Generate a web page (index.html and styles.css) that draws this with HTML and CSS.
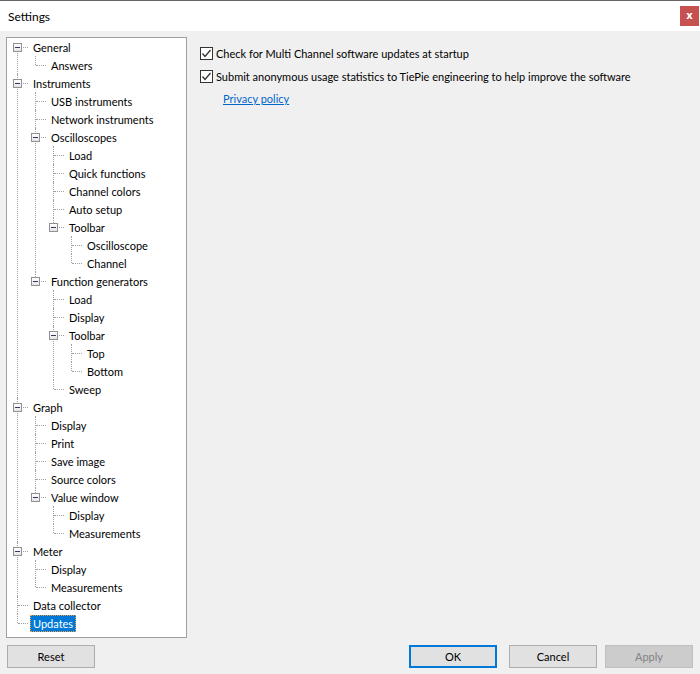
FILE: index.html
```html
<!DOCTYPE html>
<html lang="en">
<head>
<meta charset="UTF-8">
<title>Settings</title>
<link rel="stylesheet" href="styles.css">
</head>
<body>
<div class="window">
  <div class="titlebar">
    <span class="title">Settings</span>
    <span class="close">x</span>
  </div>

  <div class="main">
    <ul class="tree">
      <li><div class="node"><span class="toggle"></span><span class="label">General</span></div>
        <ul>
          <li><div class="node"><span class="label">Answers</span></div></li>
        </ul>
      </li>
      <li><div class="node"><span class="toggle"></span><span class="label">Instruments</span></div>
        <ul>
          <li><div class="node"><span class="label">USB instruments</span></div></li>
          <li><div class="node"><span class="label">Network instruments</span></div></li>
          <li><div class="node"><span class="toggle"></span><span class="label">Oscilloscopes</span></div>
            <ul>
              <li><div class="node"><span class="label">Load</span></div></li>
              <li><div class="node"><span class="label">Quick functions</span></div></li>
              <li><div class="node"><span class="label">Channel colors</span></div></li>
              <li><div class="node"><span class="label">Auto setup</span></div></li>
              <li><div class="node"><span class="toggle"></span><span class="label">Toolbar</span></div>
                <ul>
                  <li><div class="node"><span class="label">Oscilloscope</span></div></li>
                  <li><div class="node"><span class="label">Channel</span></div></li>
                </ul>
              </li>
            </ul>
          </li>
          <li><div class="node"><span class="toggle"></span><span class="label">Function generators</span></div>
            <ul>
              <li><div class="node"><span class="label">Load</span></div></li>
              <li><div class="node"><span class="label">Display</span></div></li>
              <li><div class="node"><span class="toggle"></span><span class="label">Toolbar</span></div>
                <ul>
                  <li><div class="node"><span class="label">Top</span></div></li>
                  <li><div class="node"><span class="label">Bottom</span></div></li>
                </ul>
              </li>
              <li><div class="node"><span class="label">Sweep</span></div></li>
            </ul>
          </li>
        </ul>
      </li>
      <li><div class="node"><span class="toggle"></span><span class="label">Graph</span></div>
        <ul>
          <li><div class="node"><span class="label">Display</span></div></li>
          <li><div class="node"><span class="label">Print</span></div></li>
          <li><div class="node"><span class="label">Save image</span></div></li>
          <li><div class="node"><span class="label">Source colors</span></div></li>
          <li><div class="node"><span class="toggle"></span><span class="label">Value window</span></div>
            <ul>
              <li><div class="node"><span class="label">Display</span></div></li>
              <li><div class="node"><span class="label">Measurements</span></div></li>
            </ul>
          </li>
        </ul>
      </li>
      <li><div class="node"><span class="toggle"></span><span class="label">Meter</span></div>
        <ul>
          <li><div class="node"><span class="label">Display</span></div></li>
          <li><div class="node"><span class="label">Measurements</span></div></li>
        </ul>
      </li>
      <li><div class="node"><span class="label">Data collector</span></div></li>
      <li><div class="node"><span class="label selected">Updates</span></div></li>
    </ul>

    <div class="options">
      <label class="check">
        <span class="box"><svg width="11" height="11" viewBox="0 0 11 11"><polyline points="1.5,5.5 4,8.5 9.5,2" fill="none" stroke="#333" stroke-width="1.3"/></svg></span>
        Check for Multi Channel software updates at startup
      </label>
      <label class="check">
        <span class="box"><svg width="11" height="11" viewBox="0 0 11 11"><polyline points="1.5,5.5 4,8.5 9.5,2" fill="none" stroke="#333" stroke-width="1.3"/></svg></span>
        Submit anonymous usage statistics to TiePie engineering to help improve the software
      </label>
      <a class="privacy" href="#">Privacy policy</a>
    </div>
  </div>

  <div class="footer">
    <button class="btn">Reset</button>
    <div class="spacer"></div>
    <button class="btn default">OK</button>
    <button class="btn cancel">Cancel</button>
    <button class="btn" disabled>Apply</button>
  </div>
</div>
</body>
</html>
```

FILE: styles.css
```css
body {
    margin: 0;
    background-color: #f0f0f0;
    font-family: "Lato", "Segoe UI", sans-serif;
    font-size: 11px;
    color: #000;
}

.window {
    width: 700px;
    height: 674px;
    display: flex;
    flex-direction: column;
    overflow: hidden;
}

/* Title bar */
.titlebar {
    height: 30px;
    border-top: 1px solid #666;
    background-color: #fff;
    display: flex;
    align-items: center;
    padding-left: 8px;
}

.title {
    font-size: 12px;
}

.close {
    margin-left: auto;
    margin-right: 1px;
    width: 19px;
    height: 20px;
    background-color: #c75050;
    color: #fff;
    font-family: "DejaVu Sans", sans-serif;
    font-weight: bold;
    font-size: 10px;
    line-height: 19px;
    text-align: center;
}

.main {
    display: flex;
    padding: 6px 0 0 6px;
    height: 601px;
}

/* Tree view */
.tree, .tree ul {
    list-style: none;
    margin: 0;
    padding: 0;
}

.tree {
    width: 179px;
    height: 599px;
    border: 1px solid #a0a0a0;
    background-color: #fff;
    flex-shrink: 0;
}

.tree ul {
    margin-left: 18px;
}

.tree li {
    position: relative;
}

/* vertical connector */
.tree li::before {
    content: "";
    position: absolute;
    left: 10px;
    top: 0;
    bottom: 0;
    border-left: 1px dotted #a0a0a0;
}

.tree li:last-child::before {
    bottom: auto;
    height: 9px;
}

.tree > li:first-child::before {
    top: 9px;
}

.node {
    position: relative;
    height: 18px;
    display: flex;
    align-items: center;
    padding-left: 23px;
}

/* horizontal connector */
.node::before {
    content: "";
    position: absolute;
    left: 11px;
    top: 9px;
    width: 10px;
    border-top: 1px dotted #a0a0a0;
}

.toggle {
    position: relative;
    width: 9px;
    height: 9px;
    box-sizing: border-box;
    border: 1px solid #919191;
    background: linear-gradient(#fff, #e4e4e4);
    margin-left: -17px;
    margin-right: 8px;
    margin-top: 1px;
}

.toggle::after {
    content: "";
    position: absolute;
    left: 1px;
    top: 3px;
    width: 5px;
    height: 1px;
    background-color: #2d3b63;
}

.label {
    height: 17px;
    line-height: 17px;
    padding: 0 3px;
    white-space: nowrap;
}

.label.selected {
    background-color: #0078d7;
    color: #fff;
    outline: 1px dotted #f0a040;
    outline-offset: -1px;
}

/* Options on the right */
.options {
    padding: 10px 0 0 13px;
    display: flex;
    flex-direction: column;
    align-items: flex-start;
}

.check {
    display: flex;
    align-items: center;
    height: 13px;
    margin-bottom: 10px;
    white-space: nowrap;
}

.box {
    width: 13px;
    height: 13px;
    box-sizing: border-box;
    border: 1px solid #333;
    background-color: #fff;
    margin-right: 3px;
    display: flex;
    align-items: center;
    justify-content: center;
}

.box svg {
    display: block;
}

.privacy {
    margin-left: 23px;
    margin-top: -2px;
    color: #0066cc;
    text-decoration: underline;
    line-height: 16px;
}

/* Buttons */
.footer {
    display: flex;
    padding: 7px 7px 0 7px;
    gap: 8px;
}

.spacer {
    flex: 1;
}

.btn {
    width: 88px;
    height: 23px;
    font-family: inherit;
    font-size: 11px;
    color: #000;
    background-color: #e1e1e1;
    border: 1px solid #adadad;
    padding: 0;
}

.btn.default {
    border: 2px solid #0078d7;
}

.btn.cancel {
    margin-left: 4px;
}

.btn:disabled {
    background-color: #cccccc;
    border-color: #bfbfbf;
    color: #838383;
}
```
